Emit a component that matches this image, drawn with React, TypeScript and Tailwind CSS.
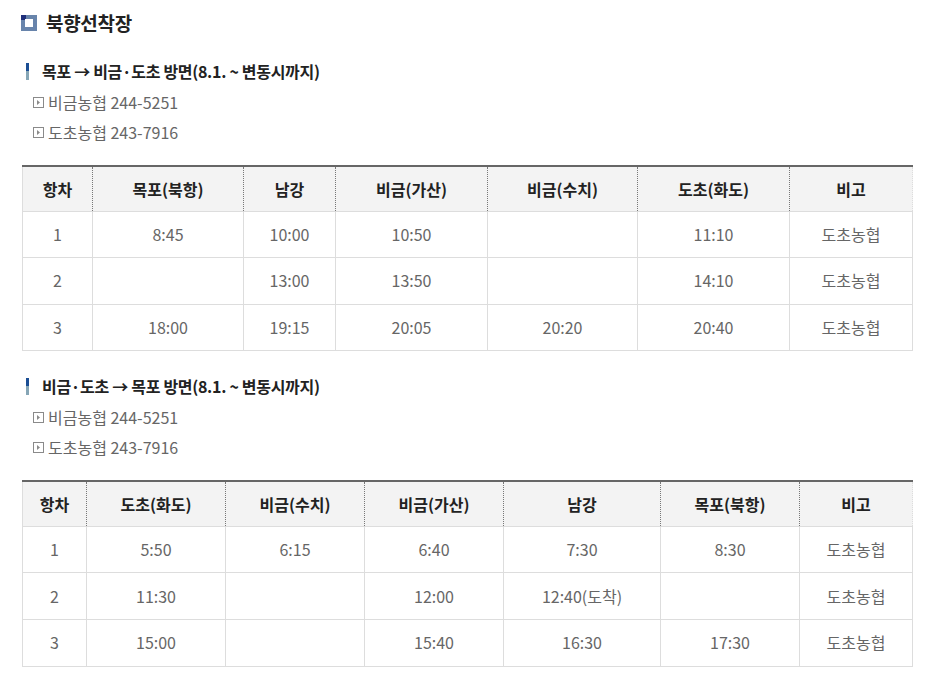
const FONT = "font-['Noto_Sans_CJK_KR','Noto_Sans',sans-serif]";

type Section = {
  title: string;
  contacts: string[];
  widths: string[];
  head: string[];
  rows: string[][];
};

const SECTIONS: Section[] = [
  {
    title: '목포 → 비금·도초 방면(8.1. ~ 변동시까지)',
    contacts: ['비금농협 244-5251', '도초농협 243-7916'],
    widths: ['w-[70px]', 'w-[151px]', 'w-[92px]', 'w-[152px]', 'w-[150px]', 'w-[152px]', 'w-[123px]'],
    head: ['항차', '목포(북항)', '남강', '비금(가산)', '비금(수치)', '도초(화도)', '비고'],
    rows: [
      ['1', '8:45', '10:00', '10:50', '', '11:10', '도초농협'],
      ['2', '', '13:00', '13:50', '', '14:10', '도초농협'],
      ['3', '18:00', '19:15', '20:05', '20:20', '20:40', '도초농협'],
    ],
  },
  {
    title: '비금·도초 → 목포 방면(8.1. ~ 변동시까지)',
    contacts: ['비금농협 244-5251', '도초농협 243-7916'],
    widths: ['w-[64px]', 'w-[139px]', 'w-[139px]', 'w-[139px]', 'w-[157px]', 'w-[139px]', 'w-[113px]'],
    head: ['항차', '도초(화도)', '비금(수치)', '비금(가산)', '남강', '목포(북항)', '비고'],
    rows: [
      ['1', '5:50', '6:15', '6:40', '7:30', '8:30', '도초농협'],
      ['2', '11:30', '', '12:00', '12:40(도착)', '', '도초농협'],
      ['3', '15:00', '', '15:40', '16:30', '17:30', '도초농협'],
    ],
  },
];

function TitleIcon() {
  return (
    <span className="relative block w-4 h-4 bg-[#6884ab]">
      <span className="absolute left-0 top-0 w-[5px] h-[5px] bg-[#1f2f7a]" />
      <span className="absolute left-[4px] top-[4px] w-2 h-2 bg-white" />
    </span>
  );
}

function BulletIcon() {
  return (
    <svg width="11" height="11" viewBox="0 0 11 11" className="shrink-0">
      <rect x="0.5" y="0.5" width="10" height="10" fill="none" stroke="#8a8a8a" />
      <path d="M4 3 L7 5.5 L4 8 Z" fill="#8a8a8a" />
    </svg>
  );
}

function ScheduleBlock({ s }: { s: Section }) {
  return (
    <div>
      <div className="flex items-center h-[20px]">
        <span className="flex flex-col w-[3px] h-[17px] ml-[4px] mr-[13px]">
          <span className="h-1/2 bg-[#1b4e94]" />
          <span className="h-1/2 bg-[#86a6b6]" />
        </span>
        <span className="text-[16px] font-bold text-[#222] tracking-[-0.3px]">{s.title}</span>
      </div>
      <ul className="mt-[6px] ml-[11px]">
        {s.contacts.map((c) => (
          <li key={c} className="flex items-center gap-[4px] h-[30px] text-[16px] text-[#666]">
            <BulletIcon />
            <span>{c}</span>
          </li>
        ))}
      </ul>
      <table className="mt-[18px] border-collapse table-fixed w-[890px] border-t-2 border-t-[#666] text-[16px]">
        <colgroup>
          {s.widths.map((w, i) => (
            <col key={i} className={w} />
          ))}
        </colgroup>
        <thead>
          <tr className="bg-[#f3f3f3] h-[45px]">
            {s.head.map((h, i) => (
              <th
                key={h}
                className={`font-bold text-[#222] border-b border-b-[#ddd] ${i === 0 ? 'border-l border-l-[#ddd]' : 'border-l border-l-[#777] border-dotted'} ${i === s.head.length - 1 ? 'border-r border-r-[#ddd] border-r-solid' : ''}`}
              >
                {h}
              </th>
            ))}
          </tr>
        </thead>
        <tbody>
          {s.rows.map((r, ri) => (
            <tr key={ri} className="h-[46.6px]">
              {r.map((c, ci) => (
                <td key={ci} className="text-center text-[#666] border border-[#ddd] pb-[1px]">
                  {c}
                </td>
              ))}
            </tr>
          ))}
        </tbody>
      </table>
    </div>
  );
}

export default function App() {
  return (
    <div className={`${FONT} bg-white w-[937px] h-[688px] px-[22px] pt-[11px] overflow-hidden`}>
      <div className="flex items-center gap-[9px] h-[24px] ml-[-1px]">
        <TitleIcon />
        <h2 className="text-[19px] font-bold text-[#222] tracking-[-0.3px]">북향선착장</h2>
      </div>
      <div className="mt-[26px]">
        <ScheduleBlock s={SECTIONS[0]} />
      </div>
      <div className="mt-[25px]">
        <ScheduleBlock s={SECTIONS[1]} />
      </div>
    </div>
  );
}
